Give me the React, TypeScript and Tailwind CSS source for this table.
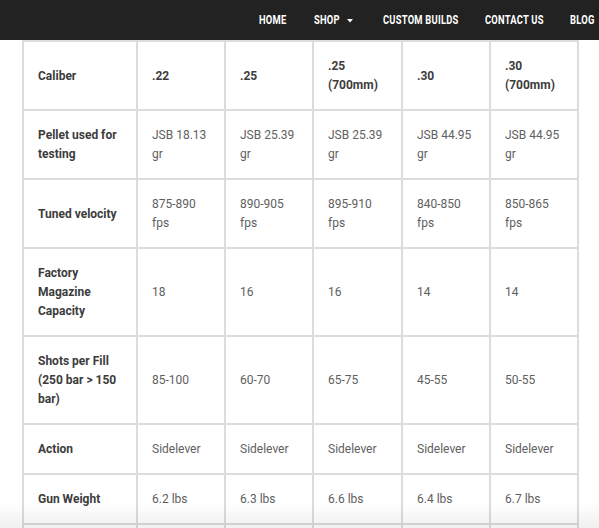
import React from "react";

const rows: { label: string; values: string[] }[] = [
  { label: "Caliber", values: [".22", ".25", ".25 (700mm)", ".30", ".30 (700mm)"] },
  { label: "Pellet used for testing", values: ["JSB 18.13 gr", "JSB 25.39 gr", "JSB 25.39 gr", "JSB 44.95 gr", "JSB 44.95 gr"] },
  { label: "Tuned velocity", values: ["875-890 fps", "890-905 fps", "895-910 fps", "840-850 fps", "850-865 fps"] },
  { label: "Factory Magazine Capacity", values: ["18", "16", "16", "14", "14"] },
  { label: "Shots per Fill (250 bar > 150 bar)", values: ["85-100", "60-70", "65-75", "45-55", "50-55"] },
  { label: "Action", values: ["Sidelever", "Sidelever", "Sidelever", "Sidelever", "Sidelever"] },
  { label: "Gun Weight", values: ["6.2 lbs", "6.3 lbs", "6.6 lbs", "6.4 lbs", "6.7 lbs"] },
  { label: "", values: ["", "", "", "", ""] },
];

function NavText({ children }: { children: React.ReactNode }) {
  return <span className="inline-block origin-left scale-x-[0.78] whitespace-nowrap">{children}</span>;
}

export default function App() {
  return (
    <div className="relative w-[599px] h-[528px] overflow-hidden bg-white" style={{ fontFamily: 'Roboto, "Liberation Sans", sans-serif' }}>
      <header className="h-[40px] bg-[#222222] flex justify-end items-center text-white text-[12px] font-bold tracking-[0.3px]">
        <span className="w-[55px]"><NavText>HOME</NavText></span>
        <span className="w-[69px] flex items-center">
          <span className="w-[33px]"><NavText>SHOP</NavText></span>
          <svg width="6" height="4" viewBox="0 0 6 4" className="mt-[1px]">
            <path d="M0 0 H6 L3 3.5 Z" fill="#ffffff" />
          </svg>
        </span>
        <span className="w-[102px]"><NavText>CUSTOM BUILDS</NavText></span>
        <span className="w-[85px]"><NavText>CONTACT US</NavText></span>
        <span className="w-[29px]"><NavText>BLOG</NavText></span>
      </header>
      <div className="ml-[22px] w-[557px] grid grid-cols-[114px_88px_88px_89px_88px_88px] border-l-2 border-t-2 border-[#dcdcdc] text-[12px] leading-[19px]">
        {rows.map((r, i) => (
          <React.Fragment key={i}>
            <div className={`border-r-2 border-b-2 border-[#dcdcdc] px-[14px] pt-[15px] pb-[14px] flex items-center font-bold text-[#3c3c3c] ${r.label === "" ? "h-[50px]" : ""}`}>
              <span>{r.label}</span>
            </div>
            {r.values.map((v, j) => (
              <div
                key={j}
                className={`border-r-2 border-b-2 border-[#dcdcdc] px-[14px] pt-[15px] pb-[14px] flex items-center ${i === 0 ? "font-bold text-[#3c3c3c]" : "text-[#606060]"}`}
              >
                <span>{v}</span>
              </div>
            ))}
          </React.Fragment>
        ))}
      </div>
      <div className="absolute left-0 right-0 bottom-0 h-[26px] bg-gradient-to-b from-transparent to-[rgba(0,0,0,0.06)] pointer-events-none" />
    </div>
  );
}
